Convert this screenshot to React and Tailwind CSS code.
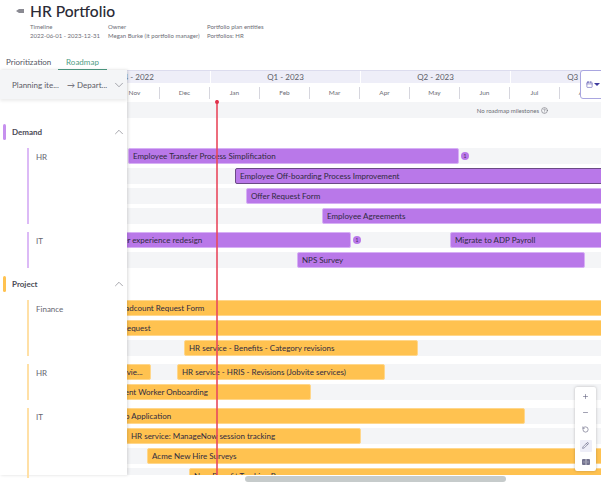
import { ChevronDown, ChevronUp, Minus, Pencil, Plus, RotateCcw, Calendar, CircleHelp } from "lucide-react";

const purple = "bg-[#b978e9] border-[#d7b0f5]";
const orange = "bg-[#ffc250] border-[#ffd78c]";

const demandHr = [
    [{ left: 1, width: 331, label: "Employee Transfer Process Simplification", badge: true }],
    [{ left: 108, width: 400, label: "Employee Off-boarding Process Improvement", selected: true }],
    [{ left: 119, width: 400, label: "Offer Request Form" }],
    [{ left: 195, width: 400, label: "Employee Agreements" }],
];

const demandIt = [
    [
        { left: -18, width: 242, label: "User experience redesign", badge: true },
        { left: 89, width: 200, label: "Migrate to ADP Payroll" },
    ],
    [{ left: 170, width: 288, label: "NPS Survey" }],
];

const projectFinance = [
    [{ left: -17, width: 520, label: "Headcount Request Form" }],
    [{ left: -23, width: 520, label: "HR Request" }],
    [{ left: 57, width: 234, label: "HR service - Benefits - Category revisions" }],
];

const projectHr = [
    [
        { left: -45, width: 69, label: "Manager revie..." },
        { left: 26, width: 208, label: "HR service - HRIS - Revisions (Jobvite services)" },
    ],
    [{ left: -35, width: 219, label: "Contingent Worker Onboarding" }],
];

const projectIt = [
    [{ left: -19, width: 417, label: "Help Application" }],
    [{ left: -1, width: 235, label: "HR service: ManageNow session tracking" }],
    [{ left: 20, width: 460, label: "Acme New Hire Surveys" }],
    [{ left: 62, width: 420, label: "New Benefit Tracking Process" }],
];

const months = ["Nov", "Dec", "Jan", "Feb", "Mar", "Apr", "May", "Jun", "Jul", "Aug"];

const Badge = () => (
    <div className="ml-[2px] flex h-[8px] w-[8px] shrink-0 items-center justify-center rounded-full bg-[#b978e9] text-[5px] leading-none text-[#4a2a63]">
        1
    </div>
);

const GanttRow = ({ bars, color }) => (
    <div className="flex h-[16px] items-center bg-[#f4f5f7]">
        {bars.map((bar, i) => (
            <div key={i} className="contents">
                <div
                    className={`flex h-[16px] shrink-0 items-center overflow-hidden whitespace-nowrap rounded-[2px] border pl-[4px] text-[8px] text-[#2f2a40] ${
                        bar.selected ? "border-[#6b4a86] bg-[#b978e9]" : color
                    }`}
                    style={{ marginLeft: bar.left, width: bar.width }}
                >
                    {bar.label}
                </div>
                {bar.badge && <Badge />}
            </div>
        ))}
    </div>
);

const RowGroup = ({ rows, color }) => (
    <div className="flex flex-col gap-[4px]">
        {rows.map((bars, i) => (
            <GanttRow key={i} bars={bars} color={color} />
        ))}
    </div>
);

const Category = ({ name, marker }) => (
    <div className="flex h-[16px] items-center pl-[3px] pr-[1px]">
        <div className={`h-[16px] w-[3px] rounded-sm ${marker}`} />
        <span className="ml-[6px] flex-1 text-[8px] font-bold text-[#4a4a55]">{name}</span>
        <ChevronUp size={14} strokeWidth={1} className="text-[#6b6b76]" />
    </div>
);

const SubGroup = ({ name, height, line }) => (
    <div className={`ml-[27px] flex border-l-[2px] pl-[7px] ${line} ${height}`}>
        <span className="mt-[4px] text-[8px] leading-[10px] text-[#66666f]">{name}</span>
    </div>
);

const App = () => {
    return (
        <div className="relative h-[483px] w-[601px] overflow-hidden bg-white font-['Lato',sans-serif] text-[#32323c]">
            {/* Header */}

            <div className="flex h-[54px] items-start pl-[16px] pt-[1px]">
                <svg width="8" height="6" viewBox="0 0 8 6" className="mt-[7px] text-[#8a8a92]">
                    <path d="M0 3 L3 1 H8 V5 H3 Z" fill="currentColor" />
                </svg>
                <div className="ml-[6px]">
                    <h1 className="text-[15.6px] font-medium leading-[20px] text-[#2b2b36]">HR Portfolio</h1>
                    <div className="mt-[1px] flex text-[6px] leading-[9px] text-[#6d6d76]">
                        <div className="w-[78px]">
                            <div>Timeline</div>
                            <div>2022-06-01 - 2023-12-31</div>
                        </div>
                        <div className="w-[99px]">
                            <div>Owner</div>
                            <div>Megan Burke (it portfolio manager)</div>
                        </div>
                        <div>
                            <div>Portfolio plan entities</div>
                            <div>Portfolios: HR</div>
                        </div>
                    </div>
                </div>
            </div>

            {/* Tabs */}

            <div className="flex h-[16px] items-start text-[8px] leading-[16px] text-[#55555f]">
                <div className="w-[58px] pl-[6px]">Prioritization</div>
                <div className="h-[16px] w-[49px] border-b-[1px] border-[#4f9d85] text-center text-[#4f9d85]">Roadmap</div>
            </div>

            {/* Roadmap */}

            <div className="flex h-[405px]">
                <div className="relative z-10 w-[127px] shrink-0 bg-white shadow-[1px_0_3px_rgba(0,0,0,0.15)]">
                    <div className="flex h-[29px] items-center bg-[#f4f5f7] pl-[12px] pr-[1px] text-[8px] text-[#5c5c66] shadow-[0_2px_3px_rgba(0,0,0,0.08)]">
                        <span className="w-[55px] whitespace-nowrap">Planning ite...</span>
                        <span className="flex-1 whitespace-nowrap">→ Depart...</span>
                        <ChevronDown size={14} strokeWidth={1} className="text-[#6b6b76]" />
                    </div>
                    <div className="flex flex-col gap-[8px] pt-[25px]">
                        <Category name="Demand" marker="bg-[#c690ee]" />
                        <SubGroup name="HR" height="h-[76px]" line="border-[#dcbaf6]" />
                        <SubGroup name="IT" height="h-[36px]" line="border-[#dcbaf6]" />
                        <Category name="Project" marker="bg-[#ffc250]" />
                        <SubGroup name="Finance" height="h-[56px]" line="border-[#ffe0a6]" />
                        <SubGroup name="HR" height="h-[36px]" line="border-[#ffe0a6]" />
                        <SubGroup name="IT" height="h-[70px]" line="border-[#ffe0a6]" />
                    </div>
                </div>

                <div className="min-w-0 flex-1 overflow-hidden">
                    {/* Quarters */}

                    <div className="flex h-[13px] items-center gap-[1px] border-t border-[#dcdcee] text-[8px] text-[#5c5c66]">
                        <div className="ml-[-66px] flex h-[12px] w-[149px] shrink-0 items-center justify-center bg-[#eeeef8]">Q4 - 2022</div>
                        <div className="flex h-[12px] w-[149px] shrink-0 items-center justify-center bg-[#eeeef8]">Q1 - 2023</div>
                        <div className="flex h-[12px] w-[149px] shrink-0 items-center justify-center bg-[#eeeef8]">Q2 - 2023</div>
                        <div className="flex h-[12px] w-[149px] shrink-0 items-center justify-center bg-[#eeeef8]">Q3 - 2023</div>
                    </div>

                    {/* Months */}

                    <div className="flex h-[19px] items-center">
                        {months.map((month, i) => (
                            <div
                                key={month}
                                className={`flex h-[12px] w-[50px] shrink-0 items-center justify-center border-r border-[#d6d6de] text-[6.5px] text-[#6d6d76] ${i === 0 ? "ml-[-17px]" : ""}`}
                            >
                                {month}
                            </div>
                        ))}
                    </div>

                    {/* Milestones */}

                    <div className="flex h-[16px] items-center justify-end bg-[#f4f5f7] pr-[53px] text-[6px] text-[#6d6d76]">
                        No roadmap milestones
                        <CircleHelp size={7} className="ml-[2px]" />
                    </div>

                    <div className="flex flex-col gap-[8px] pt-[30px]">
                        <RowGroup rows={demandHr} color={purple} />
                        <RowGroup rows={demandIt} color={purple} />
                        <div className="h-[16px]" />
                        <RowGroup rows={projectFinance} color={orange} />
                        <RowGroup rows={projectHr} color={orange} />
                        <RowGroup rows={projectIt} color={orange} />
                    </div>
                </div>
            </div>

            {/* Today marker */}

            <div className="absolute bottom-[8px] left-[216px] top-[100px] z-20 w-[2px] bg-[#e8485c]/80">
                <div className="absolute left-[-1px] top-0 h-[4px] w-[4px] rounded-full bg-[#e0304a]" />
            </div>

            {/* Date picker */}

            <div className="absolute left-[580px] top-[70px] z-20 flex h-[29px] w-[30px] items-center gap-[1px] rounded-l-[3px] border border-[#a9a6e0] bg-white pl-[5px] text-[#5b57b0]">
                <Calendar size={7} />
                <div className="h-0 w-0 border-x-[3px] border-t-[3px] border-x-transparent border-t-[#3f3b9e]" />
            </div>

            {/* Zoom controls */}

            <div className="absolute left-[575px] top-[387px] z-20 flex h-[84px] w-[21px] flex-col items-center justify-between rounded-[2px] bg-white py-[3px] text-[#5d5d7a] shadow-[0_0_3px_rgba(0,0,0,0.25)]">
                <div className="flex h-[12px] w-[12px] items-center justify-center"><Plus size={7} /></div>
                <div className="flex h-[12px] w-[12px] items-center justify-center"><Minus size={7} /></div>
                <div className="flex h-[12px] w-[12px] items-center justify-center"><RotateCcw size={7} /></div>
                <div className="flex h-[12px] w-[12px] items-center justify-center rounded-[1px] bg-[#eeeef8]"><Pencil size={7} /></div>
                <div className="flex h-[12px] w-[12px] items-center justify-center">
                    <svg width="8" height="6" viewBox="0 0 8 6">
                        <rect width="8" height="6" rx="1" fill="#73738f" />
                        <path d="M4 0 V6" stroke="#fff" strokeWidth="0.6" />
                        <path d="M1.2 3 H2.8 M5.2 3 H6.8" stroke="#c9c9d8" strokeWidth="0.6" />
                    </svg>
                </div>
            </div>

            {/* Scrollbar */}

            <div className="absolute left-[245px] top-[476px] z-20 h-[6px] w-[261px] rounded-full bg-[#c6cbcb]" />
        </div>
    );
};

export default App;
